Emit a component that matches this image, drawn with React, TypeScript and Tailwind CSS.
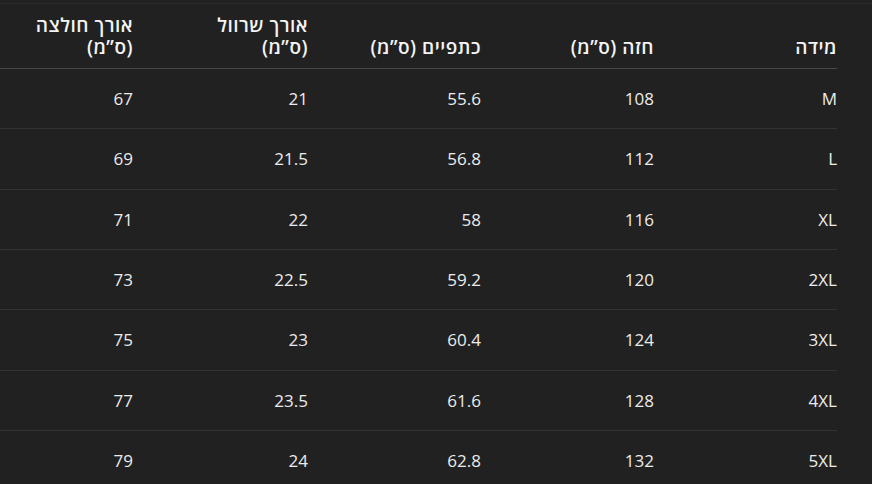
import React from "react";

const rows = [
  ["M", "108", "55.6", "21", "67"],
  ["L", "112", "56.8", "21.5", "69"],
  ["XL", "116", "58", "22", "71"],
  ["2XL", "120", "59.2", "22.5", "73"],
  ["3XL", "124", "60.4", "23", "75"],
  ["4XL", "128", "61.6", "23.5", "77"],
  ["5XL", "132", "62.8", "24", "79"],
];

const widths = ["w-[183px]", "w-[173px]", "w-[173px]", "w-[175px]", "w-[133px]"];

export default function App() {
  return (
    <div
      className="w-[872px] h-[484px] overflow-hidden bg-[#212121] text-[#ececec]"
      style={{ fontFamily: '"Open Sans", "Noto Sans", "DejaVu Sans", sans-serif' }}
    >
      <div className="h-[3px]" />
      <div className="h-px bg-[#2d2d2d]" />
      <div dir="rtl" className="w-[837px] text-[17px]">
        <div className="flex h-[65px] items-end border-b border-[#484848] pb-[10px] text-[19px] font-semibold leading-[22px] tracking-[0.5px] text-[#f4f4f4]">
          <div className={widths[0]}>מידה</div>
          <div className={widths[1]}>חזה (ס”מ)</div>
          <div className={widths[2]}>כתפיים (ס”מ)</div>
          <div className={widths[3]}>
            אורך שרוול
            <br />
            (ס”מ)
          </div>
          <div className={widths[4]}>
            אורך חולצה
            <br />
            (ס”מ)
          </div>
        </div>
        {rows.map((r, i) => (
          <div
            key={i}
            className="flex h-[60.33px] items-center border-b border-[#333333]"
          >
            {r.map((c, j) => (
              <div key={j} className={widths[j]}>
                {c}
              </div>
            ))}
          </div>
        ))}
      </div>
    </div>
  );
}
